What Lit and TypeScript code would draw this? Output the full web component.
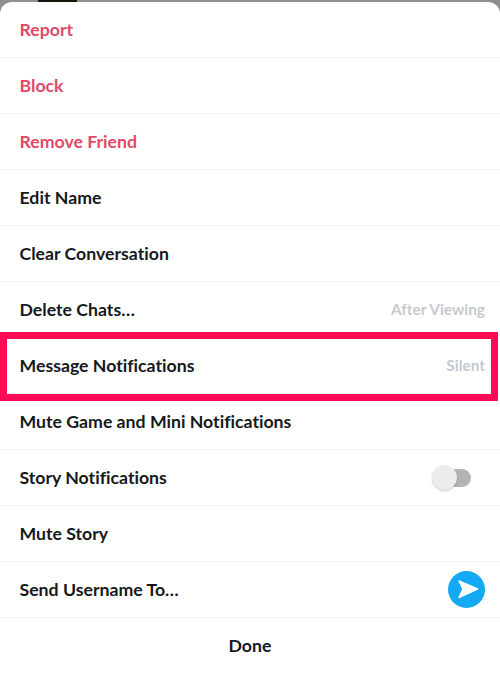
import { LitElement, html, css } from "lit";
import { customElement } from "lit/decorators.js";

type Row = { label: string; danger?: boolean; value?: string; kind?: "toggle" | "send" };

const rows: Row[] = [
  { label: "Report", danger: true },
  { label: "Block", danger: true },
  { label: "Remove Friend", danger: true },
  { label: "Edit Name" },
  { label: "Clear Conversation" },
  { label: "Delete Chats…", value: "After Viewing" },
  { label: "Message Notifications", value: "Silent" },
  { label: "Mute Game and Mini Notifications" },
  { label: "Story Notifications", kind: "toggle" },
  { label: "Mute Story" },
  { label: "Send Username To…", kind: "send" },
];

@customElement("app-root")
export class AppRoot extends LitElement {
  static styles = css`
    :host {
      display: block;
      width: 500px;
      height: 674px;
      overflow: hidden;
      background: #8f8f8f;
      font-family: "Lato", "Noto Sans", sans-serif;
      font-variant-ligatures: none;
    }
    .backdrop {
      height: 2px;
      display: flex;
      padding-left: 38px;
    }
    .photo {
      width: 39px;
      height: 2px;
      background: #14180c;
    }
    .sheet {
      position: relative;
      background: #fff;
      border-radius: 12px 12px 0 0;
      height: 672px;
    }
    .row {
      height: 56px;
      box-sizing: border-box;
      border-bottom: 1px solid #f4f4f5;
      padding: 0 15px 0 19.5px;
      display: flex;
      align-items: center;
      justify-content: space-between;
      font-size: 17.7px;
      line-height: 22px;
      font-weight: 700;
      color: #16191c;
    }
    .danger {
      color: #e04a68;
    }
    .value {
      font-size: 15.4px;
      font-weight: 700;
      color: #c6cacf;
      margin-bottom: 2px;
    }
    .done {
      justify-content: center;
      padding: 0;
      border-bottom: 0;
    }
    .toggle {
      position: relative;
      width: 39px;
      height: 26px;
      margin-right: 14px;
    }
    .track {
      position: absolute;
      left: 14px;
      top: 4px;
      width: 25px;
      height: 18px;
      border-radius: 9px;
      background: #b4b4b4;
    }
    .knob {
      position: absolute;
      left: 0;
      top: 0;
      width: 25px;
      height: 25px;
      border-radius: 50%;
      background: #ececec;
      box-shadow: 0 1px 2px rgba(0, 0, 0, 0.22);
    }
    .send {
      display: block;
      width: 37px;
      height: 37px;
    }
    .highlight {
      position: absolute;
      left: 0;
      top: 330px;
      width: 498px;
      height: 69px;
      box-sizing: border-box;
      border: 7.5px solid #ff0a54;
      pointer-events: none;
    }
  `;

  private trailing(r: Row) {
    if (r.value) return html`<span class="value">${r.value}</span>`;
    if (r.kind === "toggle")
      return html`<span class="toggle"><span class="track"></span><span class="knob"></span></span>`;
    if (r.kind === "send")
      return html`<svg class="send" viewBox="0 0 37 37">
        <circle cx="18.5" cy="18.5" r="18.5" fill="#14a9f5"></circle>
        <path d="M11 10 L29.5 18 L11 26.5 L15 18 Z" fill="#fff" stroke="#fff" stroke-width="1.5" stroke-linejoin="round"></path>
      </svg>`;
    return null;
  }

  render() {
    return html`
      <div class="backdrop"><div class="photo"></div></div>
      <div class="sheet">
        ${rows.map(
          (r) => html`<div class="row ${r.danger ? "danger" : ""}">
            <span>${r.label}</span>${this.trailing(r)}
          </div>`
        )}
        <div class="row done"><span>Done</span></div>
        <div class="highlight"></div>
      </div>
    `;
  }
}
